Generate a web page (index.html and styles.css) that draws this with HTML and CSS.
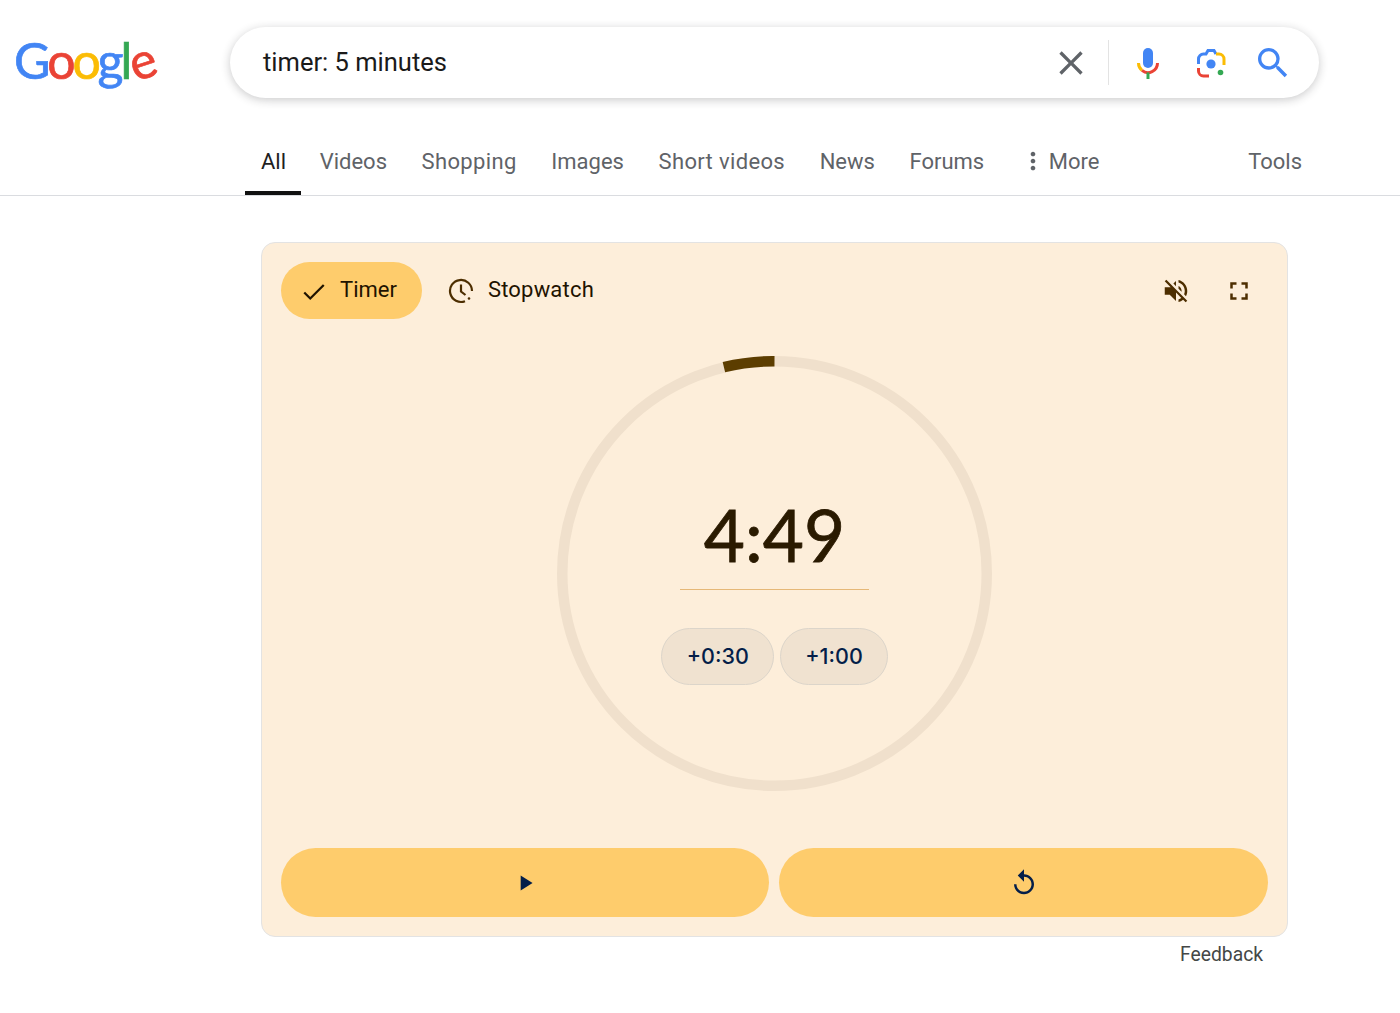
FILE: index.html
```html
<!DOCTYPE html>
<html lang="en">
<head>
<meta charset="utf-8">
<title>timer: 5 minutes - Google Search</title>
<link rel="stylesheet" href="styles.css">
</head>
<body>
<header class="top">
  <div class="logo-wrap"><span class="logo"><span class="blue">G</span><span class="red">o</span><span class="yellow">o</span><span class="blue">g</span><span class="green">l</span><span class="red tilt">e</span></span></div>
  <div class="search">
    <span class="query">timer: 5 minutes</span>
    <svg class="ic-close" viewBox="0 0 24 24"><path fill="#5f6368" d="M19 6.41 17.59 5 12 10.59 6.41 5 5 6.41 10.59 12 5 17.59 6.41 19 12 13.41 17.59 19 19 17.59 13.41 12z"/></svg>
    <span class="divider"></span>
    <svg class="ic-mic" viewBox="0 0 24 32" fill="none" stroke-width="3">
      <rect x="7" y="0" width="10" height="20" rx="5" fill="#4285f4"/>
      <path stroke="#fbbc04" d="M2.500 15A9.500 9.500 0 0 0 6 22.400"/>
      <path stroke="#ea4335" d="M6 22.400A9.500 9.500 0 0 0 21.500 15"/>
      <path stroke="#34a853" d="M12 24.500V31"/>
    </svg>
    <svg class="ic-lens" viewBox="0 0 30 30" fill="none" stroke-width="3">
      <path stroke="#4285f4" d="M2.500 16V11a5 5 0 0 1 5-5H10L12 2.500H18L20 6"/>
      <path stroke="#fbbc04" d="M20 6H23a5 5 0 0 1 5 5V17"/>
      <path stroke="#ea4335" d="M2.500 20V23a5 5 0 0 0 5 5H13"/>
      <circle cx="15" cy="16" r="4.600" fill="#4285f4"/>
      <circle cx="24.500" cy="24.500" r="2.800" fill="#34a853"/>
    </svg>
    <svg class="ic-search" viewBox="0 0 24 24"><path fill="#4285f4" d="M15.500 14h-.79l-.28-.27A6.470 6.470 0 0 0 16 9.500 6.500 6.500 0 1 0 9.500 16c1.610 0 3.090-.59 4.230-1.570l.27.28v.79l5 4.990L20.490 19l-4.990-5zm-6 0C7.010 14 5 11.990 5 9.500S7.010 5 9.500 5 14 7.010 14 9.500 11.990 14 9.500 14z"/></svg>
  </div>
</header>

<nav class="tabs">
  <a class="tab active">All</a>
  <a class="tab">Videos</a>
  <a class="tab wide">Shopping</a>
  <a class="tab">Images</a>
  <a class="tab wide">Short videos</a>
  <a class="tab">News</a>
  <a class="tab">Forums</a>
  <a class="tab more"><svg class="ic-more" viewBox="0 0 24 24"><path fill="#5f6368" d="M12 8c1.100 0 2-.9 2-2s-.9-2-2-2-2 .9-2 2 .9 2 2 2zm0 2c-1.100 0-2 .9-2 2s.9 2 2 2 2-.9 2-2-.9-2-2-2zm0 6c-1.100 0-2 .9-2 2s.9 2 2 2 2-.9 2-2-.9-2-2-2z"/></svg>More</a>
  <a class="tab tools">Tools</a>
</nav>

<main class="result">
  <section class="card">
    <div class="toolbar">
      <div class="chip selected">
        <svg class="ic-30" viewBox="0 0 24 24" fill="none"><path stroke="#1f1300" stroke-width="1.800" d="M4.200 13.200 9 18 19.800 7.200"/></svg>
        <span class="chip-label">Timer</span>
      </div>
      <div class="chip plain">
        <svg class="ic-clock" viewBox="0 0 26 26" fill="none" stroke="#4d2e00" stroke-width="2.200">
          <path d="M24 13A11 11 0 1 0 17 23.200"/>
          <path d="M13 6.500V13.500L17.500 17"/>
          <circle cx="21" cy="20.500" r="1.300" fill="#4d2e00" stroke="none"/>
        </svg>
        <span class="chip-label stopwatch">Stopwatch</span>
      </div>
      <div class="actions">
        <svg class="ic-30" viewBox="0 0 24 24"><path fill="#4d2e00" d="M16.500 12c0-1.770-1.020-3.290-2.500-4.030v2.210l2.450 2.450c.03-.2.050-.41.050-.63zm2.500 0c0 .94-.2 1.820-.54 2.640l1.510 1.510C20.630 14.910 21 13.500 21 12c0-4.280-2.990-7.860-7-8.770v2.060c2.890.86 5 3.540 5 6.710zM4.270 3 3 4.270 7.730 9H3v6h4l5 5v-6.730l4.250 4.250c-.67.52-1.420.93-2.250 1.180v2.060c1.380-.31 2.630-.95 3.690-1.810L19.730 21 21 19.730l-9-9L4.270 3zM12 4 9.910 6.090 12 8.180V4z"/></svg>
        <svg class="ic-30" viewBox="0 0 24 24"><path fill="#4d2e00" d="M7 14H5v5h5v-2H7v-3zm-2-4h2V7h3V5H5v5zm12 7h-3v2h5v-5h-2v3zM14 5v2h3v3h2V5h-5z"/></svg>
      </div>
    </div>

    <div class="dial">
      <svg class="ring" viewBox="0 0 436 436" fill="none" stroke-width="10.500">
        <circle cx="217.500" cy="217.500" r="212.250" stroke="#f0e0cc"/>
        <path stroke="#5c3d00" d="M217.500 5.250A212.250 212.250 0 0 0 166.900 11.100"/>
      </svg>
      <div class="time">4:49</div>
      <div class="adjust">
        <button class="pill">+0:30</button>
        <button class="pill narrow">+1:00</button>
      </div>
    </div>

    <div class="controls">
      <button class="control"><svg class="ic-play" viewBox="0 0 24 24"><path fill="#041e49" d="M8 5v14l11-7z"/></svg></button>
      <button class="control"><svg class="ic-30" viewBox="0 0 24 24"><path fill="#041e49" d="M12 5V1L7 6l5 5V7c3.310 0 6 2.690 6 6s-2.690 6-6 6-6-2.690-6-6H4c0 4.420 3.580 8 8 8s8-3.580 8-8-3.580-8-8-8z"/></svg></button>
    </div>
  </section>
  <div class="feedback">Feedback</div>
</main>
</body>
</html>
```

FILE: styles.css
```css
* { box-sizing: border-box; }

body {
  margin: 0;
  background: #fff;
  font-family: Roboto, "Liberation Sans", sans-serif;
  color: #1f1f1f;
}

svg { display: block; flex: none; }

.top {
  display: flex;
  align-items: flex-start;
  padding: 27px 81px 0 14px;
}

.logo-wrap {
  width: 216px;
  flex: none;
}

.logo {
  display: inline-block;
  font-family: Lato, sans-serif;
  font-size: 50px;
  line-height: 67px;
  letter-spacing: -3.100px;
  white-space: nowrap;
  -webkit-text-stroke: 0.7px currentColor;
}

.blue { color: #4285f4; }
.red { color: #ea4335; }
.yellow { color: #fbbc05; }
.green { color: #34a853; }
.tilt { display: inline-block; transform: rotate(-18deg); }

.search {
  flex: 1;
  height: 71px;
  display: flex;
  align-items: center;
  padding: 0 33px 0 33px;
  border-radius: 36px;
  background: #fff;
  box-shadow: 0 2px 10px rgba(32, 33, 36, 0.24);
}

.query {
  flex: 1;
  padding-bottom: 2px;
  font-size: 25.500px;
  color: #1a1a1a;
}

.ic-close { width: 40px; height: 40px; margin-right: 17px; }
.divider { width: 1px; height: 45px; background: #e3e3e3; margin-right: 27px; }
.ic-mic { width: 24px; height: 32px; margin-right: 36px; position: relative; top: 1px; }
.ic-lens { width: 30px; height: 30px; margin-right: 27px; }
.ic-search { width: 40px; height: 40px; margin-right: -7px; }

.tabs {
  display: flex;
  align-items: stretch;
  gap: 2.600px;
  height: 98px;
  padding: 34px 82px 0 245px;
  border-bottom: 1px solid #dadce0;
}

.tab {
  display: flex;
  align-items: center;
  padding: 0 16px 5px;
  font-size: 22px;
  color: #5f6368;
  white-space: nowrap;
}

.tab.wide { letter-spacing: 0.35px; }

.tab.active {
  padding-right: 15px;
  color: #1f1f1f;
  box-shadow: inset 0 -4px 0 #111;
}

.more { gap: 2px; }
.ic-more { width: 28px; height: 28px; }
.tools { margin-left: auto; }

.result {
  width: 1027px;
  margin: 46px 0 0 261px;
}

.card {
  height: 695px;
  padding: 19px;
  border: 1px solid #e3e3e3;
  border-radius: 14px;
  background: #fdeeda;
  display: flex;
  flex-direction: column;
}

.toolbar {
  display: flex;
  align-items: center;
  height: 57px;
}

.chip {
  display: flex;
  align-items: center;
  height: 57px;
  border-radius: 29px;
  font-size: 22px;
  color: #1f1300;
}

.chip-label { padding-bottom: 2px; }

.chip.selected {
  gap: 11px;
  padding: 0 25px 0 18px;
  background: #fecc6c;
}

.chip.plain {
  gap: 14px;
  padding: 0 24px 0 26px;
}

.stopwatch { letter-spacing: 0.2px; }

.ic-30 { width: 30px; height: 30px; }
.ic-clock { width: 26px; height: 26px; }
.ic-play { width: 26px; height: 26px; }

.actions {
  display: flex;
  gap: 33px;
  margin: 0 14px 0 auto;
}

.dial {
  position: relative;
  width: 436px;
  height: 436px;
  margin: 37px auto 0;
  padding-top: 138px;
  display: flex;
  flex-direction: column;
  align-items: center;
}

.ring {
  position: absolute;
  inset: 0;
  width: 436px;
  height: 436px;
}

.time {
  position: relative;
  width: 189px;
  height: 96px;
  border-bottom: 1px solid #e6b877;
  font-family: Lato, sans-serif;
  font-size: 71px;
  line-height: 82px;
  text-align: center;
  color: #2a1a00;
  -webkit-text-stroke: 0.8px currentColor;
}

.adjust {
  position: relative;
  display: flex;
  gap: 6px;
  margin-top: 38px;
}

.pill {
  height: 57px;
  padding: 0 24.500px 2px;
  border: 1px solid #dcd5ca;
  border-radius: 29px;
  background: #f0e2d0;
  font-family: Inter, sans-serif;
  font-size: 21.500px;
  font-weight: 500;
  color: #041e49;
}

.pill.narrow { padding: 0 24px 2px; }

.controls {
  display: grid;
  grid-template-columns: 488px 489px;
  gap: 10px;
  margin-top: auto;
}

.control {
  height: 69px;
  display: flex;
  align-items: center;
  justify-content: center;
  border: 0;
  padding: 0;
  border-radius: 35px;
  background: #fecc6c;
}

.feedback {
  margin: 6px 25px 0 0;
  text-align: right;
  font-size: 19.300px;
  line-height: 24px;
  color: #444746;
}
```
